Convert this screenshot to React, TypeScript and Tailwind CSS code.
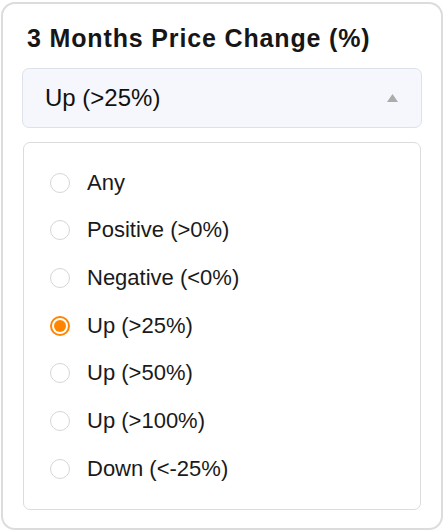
import { useState } from "react";

const options = [
    "Any",
    "Positive (>0%)",
    "Negative (<0%)",
    "Up (>25%)",
    "Up (>50%)",
    "Up (>100%)",
    "Down (<-25%)",
];

export default function App() {
    const [selected, setSelected] = useState("Up (>25%)");

    return (
        <div className="w-[444px] h-[531px] bg-white pl-[1px] pt-[2px]" style={{ fontFamily: "'Liberation Sans', Arial, sans-serif" }}>
            <div className="w-[442px] h-[528px] border-2 border-[#dcdcdc] rounded-[14px] px-[19px] pt-[19px]">
                <h2 className="text-[25px] font-bold tracking-[0.85px] text-[#161616] leading-[30px] pl-[5px]">3 Months Price Change (%)</h2>

                <button className="mt-[15px] w-full h-[60px] bg-[#f5f7fd] border border-[#dde2ea] rounded-[7px] flex items-center justify-between pl-[22px] pr-[23px]">
                    <span className="text-[24px] text-[#111] leading-none">{selected}</span>
                    <svg width="11" height="8" viewBox="0 0 11 8">
                        <path d="M5.5 0L11 8H0z" fill="#acacac" />
                    </svg>
                </button>

                <div className="mt-[14px] mx-[1px] border border-[#dcdcdc] rounded-[7px] bg-white py-[16px]">
                    {options.map((opt) => {
                        const active = opt === selected;
                        return (
                            <label key={opt} className="flex items-center h-[47.67px] pl-[26px] cursor-pointer" onClick={() => setSelected(opt)}>
                                {active ? (
                                    <span className="w-[20px] h-[20px] rounded-full border-2 border-[#ff8500] flex items-center justify-center">
                                        <span className="w-[12px] h-[12px] rounded-full bg-[#ff8500]" />
                                    </span>
                                ) : (
                                    <span className="w-[20px] h-[20px] rounded-full border-[1.5px] border-[#d6d6d6]" />
                                )}
                                <span className="ml-[17px] text-[22px] text-[#1a1a1a] leading-none">{opt}</span>
                            </label>
                        );
                    })}
                </div>
            </div>
        </div>
    );
}
